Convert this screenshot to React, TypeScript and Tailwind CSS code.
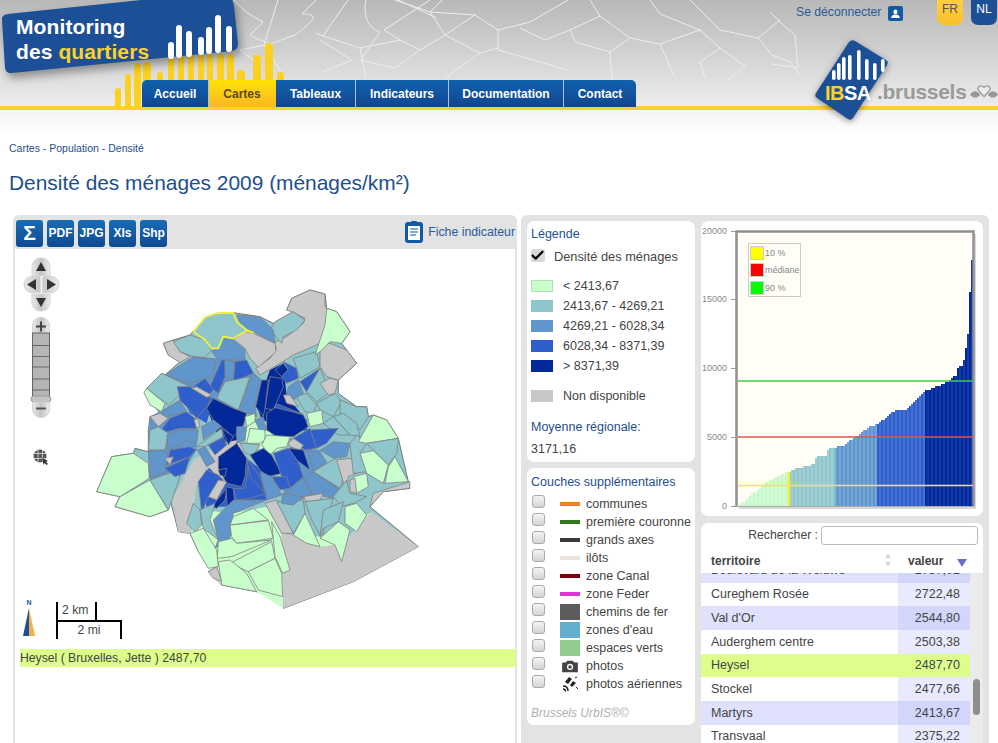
import { Check } from 'lucide-react';

const L = '#c8ffcc';
const T = '#8fc6cb';
const M = '#6096cc';
const D = '#2f5fcb';
const N = '#02289a';
const G = '#c8c8c8';

const outline =
  '20,635 65,530 130,520 135,505 175,515 175,450 180,410 210,400 165,340 170,325 215,280 225,285 270,245 235,225 220,190 250,180 300,165 345,112 380,100 430,98 510,110 550,130 610,95 590,90 605,55 660,30 705,42 710,85 740,95 780,155 755,190 770,210 800,250 745,300 745,340 800,380 830,380 835,410 850,405 890,420 925,475 955,605 960,625 880,635 840,680 985,800 790,905 580,985 578,950 500,935 395,915 355,875 380,860 325,815 300,760 265,755 255,715 240,660 235,690 180,710 75,680 90,650';

// big areas under the districts, so that no holes show between them
const underlays: Array<[string, string]> = [
  [L, '300,760 330,690 430,700 530,680 575,760 580,985 500,935 395,915 355,875 380,860 325,815'],
  [L, '610,765 700,770 760,790 800,755 830,705 845,695 760,790 755,845 690,800'],
  [M, '175,515 180,410 270,360 320,450 320,510 270,590 180,600'],
  [M, '225,285 310,230 465,240 500,290 445,390 370,355 262,325'],
  [D, '325,605 400,510 470,535 540,590 530,660 430,680 350,680'],
  [M, '580,645 600,500 690,510 750,630 660,660'],
  [D, '260,320 370,355 350,430 300,400'],
  [N, '350,385 470,400 460,440 430,500 385,470'],
  [N, '500,380 540,270 580,250 590,350 650,420 650,450 560,470 520,430'],
  [L, '455,440 520,420 600,470 590,500 540,520 470,490'],
  [G, '440,480 470,520 400,610 355,560 320,615 300,760 265,755 245,660 310,540 400,490'],
  [T, '430,380 500,290 510,300 450,400'],
  [G, '575,760 620,770 690,800 735,795 755,845 760,790 845,695 985,800 790,905 580,985'],
];

// map coordinates are in 3x space: the svg scales them down to 340px
const districts: Array<[string, string]> = [
  [G, '590,90 605,55 660,30 705,42 705,75 725,120 690,190 610,225 570,250 510,285 497,265 540,235 560,205 550,190 590,170 640,130 645,115 605,95'],
  [G, '430,178 465,155 490,160 555,190 558,215 505,262 480,235 465,205'],
  [T, '555,125 610,95 645,120 620,150 580,170 575,190 540,150'],
  [M, '440,105 510,110 550,150 555,190 490,155 460,150'],
  [G, '220,190 250,180 270,215 300,230 270,248 235,225'],
  [T, '250,185 300,165 345,180 365,210 345,232 310,230 270,215'],
  [M, '365,215 400,175 430,180 465,210 465,240 385,240'],
  [M, '225,285 310,230 375,240 370,290 330,300 300,310'],
  [D, '360,320 395,240 405,240 405,290 385,340'],
  [M, '405,240 435,245 430,300 405,290'],
  [D, '435,245 470,240 490,280 430,305'],
  [T, '170,325 215,280 300,320 262,325 270,345 235,375'],
  [L, '162,338 170,325 225,370 215,395 180,375'],
  [T, '380,355 405,305 480,290 445,390'],
  [M, '445,390 490,280 515,300 495,380 500,410'],
  [D, '262,320 300,320 350,350 365,355 350,380 320,415 300,390 270,360'],
  [D, '310,320 345,295 370,330 355,345'],
  [G, '305,325 320,320 365,345 350,352'],
  [N, '350,385 370,355 430,385 470,400 460,435 430,470 395,440 370,420'],
  [M, '215,395 270,360 290,395 225,410'],
  [G, '180,410 210,400 235,415 205,440'],
  [D, '210,455 240,415 290,395 320,420 320,445 270,445 215,460'],
  [G, '312,420 325,415 330,440 320,445'],
  [T, '180,450 205,440 235,460 225,510 175,510'],
  [M, '230,465 270,450 325,450 320,490 285,480 270,495 235,510'],
  [M, '335,440 370,420 395,440 340,480'],
  [T, '320,500 395,445 400,470 345,500'],
  [D, '355,495 400,472 410,495 375,525'],
  [M, '322,510 345,500 375,545 350,560'],
  [N, '555,270 580,250 595,270 575,290'],
  [N, '540,290 575,295 580,320 550,390 525,385'],
  [N, '497,380 515,300 535,300 525,385 520,408'],
  [D, '580,245 620,265 625,295 590,310 575,290 595,270'],
  [M, '595,320 625,300 640,340 610,360 590,340'],
  [G, '580,345 600,345 625,380 590,370'],
  [T, '610,235 680,215 690,260 630,295'],
  [D, '630,305 690,265 650,335'],
  [T, '650,335 690,265 705,300 715,340 680,365'],
  [G, '690,310 720,295 745,300 735,340 715,345'],
  [G, '690,190 720,190 770,210 800,250 745,300 710,290 690,260'],
  [L, '675,225 705,135 710,85 740,95 780,155 755,190 720,185 690,215'],
  [T, '620,350 650,340 680,375 670,400 645,395'],
  [T, '680,370 735,340 755,365 730,410 690,390'],
  [N, '530,400 560,380 640,405 655,440 610,470 560,470 530,450'],
  [D, '552,382 562,372 640,403'],
  [L, '650,400 695,390 700,430 660,440'],
  [L, '465,410 495,400 495,425 470,440'],
  [M, '495,420 520,410 530,450 510,455'],
  [T, '750,360 800,380 830,380 835,410 810,450 770,410 750,400'],
  [T, '730,410 760,400 800,430 810,470 780,465'],
  [T, '700,430 730,410 780,465 745,465'],
  [D, '660,450 745,445 710,490 680,505'],
  [D, '610,475 660,445 680,505 645,510 600,480'],
  [M, '690,510 730,485 780,490 770,530 730,535'],
  [G, '595,490 610,475 640,495 630,510 600,500'],
  [L, '470,490 480,445 525,450 525,480 510,490'],
  [L, '515,495 530,465 600,470 590,500 560,505 540,525'],
  [T, '450,490 470,490 510,495 490,525 465,520'],
  [M, '440,440 470,440 465,480 440,490'],
  [N, '395,445 430,470 415,495'],
  [N, '480,525 520,505 545,525 575,580 535,590 510,570'],
  [N, '595,505 640,510 660,570 620,540'],
  [D, '550,520 595,505 625,545 640,590 600,625 575,590'],
  [D, '545,590 590,590 600,625 570,630'],
  [M, '510,575 545,590 575,645 530,660'],
  [M, '600,625 640,595 665,640 610,670 580,645'],
  [M, '640,590 670,575 750,630 730,655 665,640'],
  [M, '655,510 690,520 710,545 670,575'],
  [T, '670,575 710,550 750,530 765,580 750,625'],
  [G, '740,540 780,535 820,570 775,590 770,640'],
  [T, '780,490 800,465 830,490 810,520 830,575 790,580'],
  [L, '805,485 850,405 890,420 925,475 830,490'],
  [T, '830,490 925,475 920,520 895,555 850,510'],
  [L, '810,520 850,512 895,555 880,610 830,580'],
  [L, '885,610 895,560 915,530 955,605'],
  [L, '790,590 830,580 835,620 800,640'],
  [G, '780,600 795,595 800,640 780,635'],
  [G, '850,640 960,605 958,625 880,635 840,680'],
  [T, '730,650 770,600 780,640 830,650 790,670 755,680'],
  [N, '385,530 440,490 470,535 465,590 455,620 410,610 385,565'],
  [N, '385,570 410,565 405,590 390,585'],
  [D, '325,605 350,570 385,585 400,600 370,630 350,660 335,700'],
  [G, '355,650 385,600 410,605 380,660'],
  [N, '365,680 410,625 405,660 380,685'],
  [N, '408,620 430,625 435,680 412,690'],
  [D, '430,625 465,625 475,560 530,640 480,655 440,660'],
  [D, '470,535 510,590 525,640 480,590'],
  [L, '20,635 65,530 130,520 175,550 178,595 90,650'],
  [L, '75,680 90,650 180,600 235,690 180,710'],
  [T, '180,600 250,575 270,590 235,690'],
  [M, '175,515 225,510 235,530 225,560 230,575 180,595'],
  [D, '225,565 300,530 285,580 255,590'],
  [D, '240,510 300,500 318,510 300,530 230,555'],
  [G, '225,535 250,530 240,555'],
  [T, '290,730 310,670 330,690 335,735 315,755'],
  [T, '330,690 375,670 360,720 385,780 340,745'],
  [M, '370,720 430,660 530,660 480,680 430,700 420,775 375,805 385,780'],
  [G, '525,670 560,660 610,760 575,760'],
  [T, '560,665 640,660 645,700 610,760'],
  [M, '578,640 640,650 610,675 575,670'],
  [G, '640,650 700,640 690,660 650,665'],
  [T, '645,665 730,655 695,775 665,720'],
  [T, '700,690 760,665 745,725 700,745 690,770'],
  [L, '765,680 800,670 830,705 800,755 765,730'],
  [L, '690,775 745,725 780,750 755,845 735,795'],
  [L, '610,765 645,700 690,800 650,790'],
  [L, '300,760 340,745 380,810 385,860 355,865 325,815'],
  [L, '420,735 535,722 550,775 440,790 425,770'],
  [L, '430,710 490,685 535,720 420,735'],
  [L, '385,785 425,775 440,790 545,780 425,830 382,835'],
  [L, '420,850 545,785 555,835 475,875'],
  [L, '475,875 555,835 575,880 578,950 505,930'],
  [L, '545,725 570,770 600,870 578,880 555,830'],
  [L, '385,845 420,840 470,880 500,935 395,915'],
  [G, '355,875 380,860 395,905 370,895'],
];

const heysel = '310,155 345,112 380,100 430,98 440,125 470,150 490,158 470,152 430,175 400,170 385,205 365,205 345,180';

const legendClasses: Array<[string, string, string]> = [
  ['< 2413,67', 'bg-[#c8ffcc]', 'border border-[#b6ddb8]'],
  ['2413,67 - 4269,21', 'bg-[#8fc6cb]', ''],
  ['4269,21 - 6028,34', 'bg-[#6096cc]', ''],
  ['6028,34 - 8371,39', 'bg-[#2f5fcb]', ''],
  ['> 8371,39', 'bg-[#02289a]', ''],
];

const layers: Array<{ label: string; swatch: string }> = [
  { label: 'communes', swatch: 'h-1 bg-[#f08020]' },
  { label: 'première couronne', swatch: 'h-1 bg-[#2e7d1a]' },
  { label: 'grands axes', swatch: 'h-1 bg-[#3a3a3a]' },
  { label: 'ilôts', swatch: 'h-1 bg-[#e8e4dc]' },
  { label: 'zone Canal', swatch: 'h-1 bg-[#7a0010]' },
  { label: 'zone Feder', swatch: 'h-1 bg-[#d838d8]' },
  { label: 'chemins de fer', swatch: 'h-4 bg-[#5c5c5c]' },
  { label: "zones d'eau", swatch: 'h-4 bg-[#62b0cc]' },
  { label: 'espaces verts', swatch: 'h-4 bg-[#93cc8f]' },
];

const rows: Array<[string, string, string, string]> = [
  ['Boulevard de la Woluwe', '2737,02', 'bg-[#e0e2fd]', 'bg-[#d3d6fb]'],
  ['Cureghem Rosée', '2722,48', 'bg-white', 'bg-[#e9eafc]'],
  ["Val d'Or", '2544,80', 'bg-[#e0e2fd]', 'bg-[#d3d6fb]'],
  ['Auderghem centre', '2503,38', 'bg-white', 'bg-[#e9eafc]'],
  ['Heysel', '2487,70', 'bg-[#ddfd8c]', 'bg-[#ddfd8c]'],
  ['Stockel', '2477,66', 'bg-white', 'bg-[#e9eafc]'],
  ['Martyrs', '2413,67', 'bg-[#e0e2fd]', 'bg-[#d3d6fb]'],
  ['Transvaal', '2375,22', 'bg-white', 'bg-[#e9eafc]'],
];

const navItems = [
  { label: 'Accueil', w: 'w-[67px]' },
  { label: 'Cartes', w: 'w-[67px]', active: true },
  { label: 'Tableaux', w: 'w-[80px]' },
  { label: 'Indicateurs', w: 'w-[93px]' },
  { label: 'Documentation', w: 'w-[115px]' },
  { label: 'Contact', w: 'w-[72px]' },
];

// curve of the sorted values, read off the chart (x px, y px)
const curve: Array<[number, number]> = [
  [737, 506], [767, 481], [787, 472], [793, 469], [813, 464], [815, 457], [825, 455], [827, 449],
  [843, 445], [857, 435], [870, 426], [877, 424], [893, 411], [905, 409], [920, 396], [924, 391],
  [943, 384], [955, 375], [957, 368], [962, 365], [966, 343], [968, 323], [970, 260], [973, 260],
];

function curveY(x: number) {
  for (let i = 1; i < curve.length; i++) {
    if (x <= curve[i][0]) {
      const [x0, y0] = curve[i - 1];
      const [x1, y1] = curve[i];
      return y0 + ((x - x0) / (x1 - x0)) * (y1 - y0);
    }
  }
  return 260;
}

function barColor(x: number, odd: boolean) {
  if (x < 789) return odd ? '#c8f8cc' : '#d2fad4';
  if (x < 834) return odd ? '#8fc6cb' : '#a0ced2';
  if (x < 877) return odd ? '#6096cc' : '#75a5d4';
  if (x < 925) return odd ? '#2f5fcb' : '#4571d2';
  return odd ? '#02289a' : '#123aa8';
}

function Chart() {
  const bars = [];
  for (let x = 737; x < 973; x += 2) {
    const y = Math.round(curveY(x) / 2) * 2;
    bars.push(<rect key={x} x={x} y={y} width={2} height={506 - y} fill={barColor(x, (x - 737) % 4 === 0)} />);
  }
  const ticks: Array<[string, number]> = [['20000', 231], ['15000', 299], ['10000', 368], ['5000', 437], ['0', 506]];
  return (
    <svg viewBox="701 221 282 295" className="h-[295px] w-[282px] font-['Liberation_Sans',sans-serif]">
      <rect x="739" y="234" width="237" height="275" fill="#d8d8d8" />
      <rect x="736" y="231" width="238" height="275" fill="#fffdf6" />
      {bars}
      <path d="M736.5 506V231.5H973.5V506" fill="none" stroke="#909090" strokeWidth="2.5" />
      <path d="M736 506.5H974" stroke="#aaa" />
      <path d="M738 381H973" stroke="#3ccf3c" strokeWidth="1.4" />
      <path d="M738 437H973" stroke="#e25555" strokeWidth="1.6" />
      <path d="M738 485.5H973" stroke="#ecec48" strokeWidth="1.3" />
      <path d="M789 472V506" stroke="#f2ee30" strokeWidth="2.5" />
      {ticks.map(([label, y]) => (
        <g key={label}>
          <path d={`M731 ${y + 0.5}H736`} stroke="#999" />
          <text x="727" y={y + 3} textAnchor="end" fontSize="9" fill="#888">{label}</text>
        </g>
      ))}
      <rect x="748.5" y="243.5" width="52" height="53" fill="#fffdf6" stroke="#ccc" />
      <rect x="750.5" y="246.5" width="13" height="13" fill="#ffff00" stroke="#ccc" />
      <rect x="750.5" y="263.5" width="13" height="13" fill="#ff0000" stroke="#ccc" />
      <rect x="750.5" y="281.5" width="13" height="13" fill="#00ff00" stroke="#ccc" />
      <text x="765" y="256" fontSize="9" fill="#888">10 %</text>
      <text x="765" y="273" fontSize="9" fill="#888">médiane</text>
      <text x="765" y="291" fontSize="9" fill="#888">90 %</text>
    </svg>
  );
}

function HeaderLines() {
  return (
    <svg viewBox="0 0 998 110" className="absolute inset-0 h-[110px] w-[998px]" fill="none" stroke="#ededed" strokeWidth="1">
      <path d="M234 0C245 12 250 15 263 22L250 35C262 42 268 42 270 44L295 35C312 22 322 14 302 14L316 0" />
      <path d="M278 0L264 45L285 78M270 44L240 50L262 66" />
      <path d="M316 33L323 36L348 0M323 36L360 48L366 78M320 40L352 60L322 72M366 0C362 20 372 30 380 32L362 58" />
      <path d="M360 48L400 40L420 50L395 68L360 60M400 40L384 30L430 0M420 50L445 35L430 12L442 0M445 35L480 53L498 48" />
      <path d="M395 0L430 12L475 15L445 35M475 15L498 30L498 50M398 0L437 18M480 53L445 78M498 50L540 62L568 70M498 30L530 22L568 0" />
      <path d="M520 28L545 40L570 30L575 42L610 52L612 80M570 30L600 16L630 38L610 52M600 16L590 0M630 38L660 44L700 30L720 48L700 62L705 78" />
      <path d="M660 44L675 78M690 0L720 30L758 38L772 55L790 62L800 75M720 48L745 66L728 80M650 0L660 14L700 30M758 38L780 20M770 12L782 24L795 35L798 68L772 64" />
      <path d="M90 104C95 98 110 100 115 105" strokeWidth="0.8" />
    </svg>
  );
}

function HeaderBars() {
  const yellow: Array<[number, number, number]> = [
    [115, 88, 6], [125, 74, 6], [134, 63, 7], [143, 62, 8], [157, 72, 6], [168, 58, 6], [178, 54, 6], [188, 54, 6],
    [198, 54, 6], [207, 54, 6], [217, 54, 7], [227, 54, 7], [237, 70, 8], [253, 55, 8], [265, 43, 8], [277, 72, 7],
  ];
  const white: Array<[number, number, number]> = [
    [168, 42, 59], [176, 25, 58], [186, 31, 57], [198, 37, 55], [206, 27, 54], [215, 15, 53], [226, 26, 52],
  ];
  return (
    <svg viewBox="0 0 300 110" className="absolute left-0 top-0 h-[110px] w-[300px]">
      {yellow.map(([x, y, w]) => (
        <rect key={x} x={x} y={y} width={w} height={107 - y} rx={w / 2} fill="#fcd01f" />
      ))}
      <path d="M2 20Q1 15 8 14L160 -2H231Q233 0 234 6L238 44Q238 50 232 51L12 73Q6 74 5 68Z" fill="#1c4f96" className="drop-shadow-[3px_5px_4px_rgba(0,0,0,0.35)]" />
      {white.map(([x, y, b]) => (
        <rect key={x} x={x} y={y} width={6} height={b - y} rx={3} fill="#fff" />
      ))}
    </svg>
  );
}

function IbsaLogo() {
  const bars: Array<[number, number, number]> = [
    [832, 70, 80], [837, 63, 80], [842, 57, 80], [848, 55, 80], [857, 50, 80], [865, 59, 80], [873, 63, 80], [881, 59, 72],
  ];
  return (
    <svg viewBox="800 30 100 100" className="absolute left-[800px] top-[30px] h-[100px] w-[100px] drop-shadow-[0_2px_3px_rgba(0,0,0,0.4)]">
      <path d="M849 42Q852 39 855 41L886 60Q889 62 887 65L853 118Q851 121 848 119L817 98Q814 96 816 93Z" fill="#1c4f96" />
      {bars.map(([x, y, b]) => (
        <rect key={x} x={x} y={y} width={3.6} height={b - y} rx={1.8} fill="#fff" />
      ))}
    </svg>
  );
}

function MapControls() {
  const up = 'M41 258C47 258 50 262 50 268V276H32V268C32 262 35 258 41 258Z';
  return (
    <svg viewBox="20 255 44 215" className="absolute left-[20px] top-[255px] h-[215px] w-[44px]">
      <defs>
        <linearGradient id="ctl" x1="0" x2="1" y1="0" y2="0">
          <stop offset="0" stopColor="#e8e8e8" />
          <stop offset="0.5" stopColor="#c4c4c4" />
          <stop offset="1" stopColor="#ededed" />
        </linearGradient>
      </defs>
      <path d={up} fill="url(#ctl)" stroke="#d4d4d4" />
      <path d="M41 262L46 271H36Z" fill="#333" />
      <rect x="24" y="276.5" width="35" height="16" rx="8" fill="url(#ctl)" stroke="#d4d4d4" />
      <path d="M27 284.5L36 279V290ZM56 284.5L47 279V290Z" fill="#333" />
      <path d="M41.5 276V293" stroke="#f4f4f4" strokeWidth="2" />
      <path d="M41 311C47 311 50 307 50 302V294H32V302C32 307 35 311 41 311Z" fill="url(#ctl)" stroke="#d4d4d4" />
      <path d="M41 307L46 298H36Z" fill="#333" />
      <path d="M32.5 333V326C32.5 321 36 317.5 41 317.5C46 317.5 49.5 321 49.5 326V333Z" fill="url(#ctl)" stroke="#d4d4d4" />
      <path d="M36 326.5H46M41 321.5V331.5" stroke="#444" strokeWidth="2" />
      <rect x="32.5" y="333" width="17" height="65" fill="#b5b5b5" stroke="#666" />
      <path d="M32 345.5H50M32 356.5H50M32 367H50M32 379H50M32 390H50" stroke="#666" />
      <rect x="31" y="396" width="20" height="6" rx="3" fill="#c4c4c4" stroke="#999" />
      <path d="M32.5 402H49.5V408C49.5 414 46 417.5 41 417.5C36 417.5 32.5 414 32.5 408Z" fill="url(#ctl)" stroke="#d4d4d4" />
      <path d="M36 408.5H46" stroke="#555" strokeWidth="2" />
      <circle cx="40" cy="456" r="6.5" fill="#555" />
      <path d="M34 453.5H46M34 458.5H46M38 450V462M42.5 450V462" stroke="#ddd" strokeWidth="0.8" />
      <path d="M42 458L48 461L46 462L48 464L46.5 465L44.5 463L43.5 465Z" fill="#333" />
    </svg>
  );
}

function ToolButton({ children, big }: { children: string; big?: boolean }) {
  return (
    <button className={`flex h-[27px] w-[27px] items-center justify-center rounded-[3px] bg-gradient-to-b from-[#1a6bb5] to-[#0f4a92] font-bold text-white ${big ? 'text-[21px]' : 'text-[12px]'}`}>
      {children}
    </button>
  );
}

function Card({ className, children }: { className: string; children: React.ReactNode }) {
  return <div className={`rounded-[7px] bg-white ${className}`}>{children}</div>;
}

function Box() {
  return <input type="checkbox" className="mt-[-5px] h-[13px] w-[13px] appearance-none rounded-[3px] border border-[#aaa] bg-gradient-to-b from-[#f4f4f4] to-[#d4d4d4]" />;
}

export default function App() {
  return (
    <div className="relative h-[743px] w-[998px] overflow-hidden bg-white font-['Liberation_Sans',sans-serif] text-[#444]">
      <header className="relative h-[110px] border-b-[4px] border-[#fcd22a] bg-gradient-to-b from-[#b8b8b8] to-[#ececec]">
        <HeaderLines />
        <HeaderBars />
        <div className="absolute left-[16px] top-[14px] text-[21px] font-bold leading-[25px] tracking-[0.1px] text-white">
          <div>Monitoring</div>
          <div>des <span className="text-[#fcd22a]">quartiers</span></div>
        </div>
        <nav className="absolute left-[142px] top-[80px] flex h-[27px] overflow-hidden rounded-tl-[5px] rounded-tr-[5px] text-[12px] font-bold">
          {navItems.map((item) => (
            <a
              key={item.label}
              className={`flex items-center justify-center border-r border-[#a8c4e0] last:border-r-0 ${item.w} ${item.active ? 'border-transparent bg-gradient-to-b from-[#ffe100] to-[#f8b820] text-[#5c4a14]' : 'bg-gradient-to-b from-[#0f62ae] to-[#11468f] text-white'}`}
            >
              {item.label}
            </a>
          ))}
        </nav>
        <div className="absolute left-[796px] top-[3px] flex items-center gap-[7px] text-[12.2px] text-[#2a5a9c]">
          <span>Se déconnecter</span>
          <span className="mt-[2px] flex h-[15px] w-[15px] items-center justify-center rounded-[2px] bg-[#125aa5]">
            <svg viewBox="0 0 12 12" className="h-[11px] w-[11px]"><path d="M6 1.5C7.5 1.5 8.2 2.6 8.2 4S7.4 6.6 6 6.6 3.8 5.4 3.8 4 4.5 1.5 6 1.5ZM1.5 11V9.5C2 8 3.5 7.5 5 7H7C8.5 7.5 10 8 10.5 9.5V11Z" fill="#fff" /></svg>
          </span>
        </div>
        <a className="absolute left-[937px] top-0 flex h-[25px] w-[26px] justify-center rounded-b-[7px] bg-gradient-to-b from-[#fccf3a] to-[#fbbf32] text-[12px] text-[#555]">FR</a>
        <a className="absolute left-[971px] top-0 flex h-[25px] w-[26px] justify-center rounded-b-[7px] bg-[#1c4f96] text-[12px] text-white">NL</a>
      </header>
      <IbsaLogo />
      <div className="absolute left-[825px] top-[81px] text-[20px] font-bold leading-[24px] tracking-[-0.5px]">
        <span className="text-[#fcd22a]">IB</span><span className="text-white">SA</span>
      </div>
      <div className="absolute left-[877px] top-[79px] text-[21px] font-bold leading-[26px] tracking-[-0.3px] text-[#9a9a9a]">.brussels</div>
      <svg viewBox="0 0 30 18" className="absolute left-[970px] top-[83px] h-[18px] w-[28px]">
        <path d="M0 12C3 7 8 7 11 12C8 16 3 16 0 12ZM19 12C22 7 27 7 30 12C27 16 22 16 19 12Z" fill="#999" />
        <path d="M15 14L9 7C7 3 12 1 15 4C18 1 23 3 21 7Z" fill="#eee" stroke="#999" strokeWidth="1.5" />
      </svg>

      <div className="h-[24px] bg-gradient-to-b from-[#f3f3f3] to-white" />
      <p className="ml-[9px] mt-[7px] text-[10.5px] leading-[14px] text-[#1d4f8c]">Cartes - Population - Densité</p>
      <h1 className="ml-[9px] mt-[14px] text-[20.9px] leading-[28px] text-[#1d4f8c]">Densité des ménages 2009 (ménages/km²)</h1>

      <div className="mt-[18px] flex pl-[13px]">
        <section className="relative h-[528px] w-[504px] rounded-tl-[6px] rounded-tr-[6px] bg-[#e3e3e3] px-[2px] pt-[2px]">
          <div className="flex h-[32px] items-center gap-[4px] pl-[1px]">
            <ToolButton big>Σ</ToolButton>
            <ToolButton>PDF</ToolButton>
            <ToolButton>JPG</ToolButton>
            <ToolButton>XIs</ToolButton>
            <ToolButton>Shp</ToolButton>
            <div className="ml-auto -mt-[2px] flex items-center gap-[4px] text-[12.3px] text-[#2a5a9c]">
              <svg viewBox="0 0 20 24" className="h-[24px] w-[20px]">
                <rect x="1" y="2" width="18" height="21" rx="3" fill="#125aa5" />
                <rect x="4" y="6" width="12" height="14" fill="#fff" />
                <rect x="7" y="1" width="6" height="4" rx="1" fill="#125aa5" />
                <path d="M6 9H14M6 12H14M6 15H12" stroke="#125aa5" />
              </svg>
              <span>Fiche indicateur</span>
            </div>
          </div>
          <div className="h-[494px] bg-white" />
          <div className="absolute inset-0 left-[-13px] top-[-215px]">
            <MapControls />
            <svg viewBox="0 0 1020 1020" className="absolute left-[90px] top-[280px] h-[340px] w-[340px]">
              <polygon points={outline} fill={T} stroke="#777" strokeWidth="3" strokeLinejoin="round" />
              {underlays.map(([fill, points], i) => (
                <polygon key={i} points={points} fill={fill} />
              ))}
              {districts.map(([fill, points], i) => (
                <polygon key={i} points={points} fill={fill} stroke="#808080" strokeWidth="2.4" strokeLinejoin="round" />
              ))}
              <polygon points={heysel} fill={T} stroke="#f4f43a" strokeWidth="5" strokeLinejoin="round" />
            </svg>
            <svg viewBox="0 0 14 38" className="absolute left-[22px] top-[599px] h-[38px] w-[14px]">
              <text x="7" y="6" textAnchor="middle" fontSize="7" fontWeight="bold" fill="#1c4f96">N</text>
              <path d="M7 9V37H1Z" fill="#1c4f96" />
              <path d="M7 9V37H13Z" fill="#f4b042" />
            </svg>
            <div className="absolute left-[56px] top-[602px] h-[18px] w-[41px] border-l-2 border-r-2 border-black pl-[4px] text-[12.2px] leading-[16px]">2 km</div>
            <div className="absolute left-[56px] top-[620px] h-[19px] w-[66px] border-l-2 border-r-2 border-t-2 border-black text-center text-[12.2px] leading-[17px]">2 mi</div>
            <div className="absolute left-[20px] top-[649px] flex h-[18px] w-[496px] items-center bg-[#ddfd8c] text-[12.2px] text-[#444]">Heysel ( Bruxelles, Jette ) 2487,70</div>
          </div>
        </section>

        <section className="ml-[4px] flex h-[528px] w-[468px] gap-[6px] rounded-tl-[6px] rounded-tr-[6px] bg-[#e3e3e3] pl-[6px] pr-[6px] pt-[6px]">
          <div className="flex w-[168px] flex-col gap-[6px]">
            <Card className="h-[241px] px-[4px] pt-[6px] text-[12.5px]">
              <h2 className="text-[12.5px] leading-[14px] text-[#1d4f8c]">Légende</h2>
              <div className="mt-[8px] flex items-center gap-[9px] text-[12.8px] leading-[16px]">
                <span className="relative -mt-[3px] h-[13px] w-[14px] rounded-[2px] bg-[#d8d8d8]">
                  <Check className="absolute -left-[1px] -top-[1px] h-[15px] w-[15px] text-black" strokeWidth={3.5} />
                </span>
                <span>Densité des ménages</span>
              </div>
              <ul className="mt-[14px] flex flex-col gap-[6px] leading-[14px]">
                {legendClasses.map(([label, bg, border]) => (
                  <li key={label} className="flex items-center gap-[10px]">
                    <span className={`h-[12px] w-[22px] ${bg} ${border}`} />
                    <span>{label}</span>
                  </li>
                ))}
              </ul>
              <div className="mt-[16px] flex items-center gap-[10px] leading-[14px]">
                <span className="h-[12px] w-[22px] bg-[#c8c8c8]" />
                <span>Non disponible</span>
              </div>
              <p className="mt-[17px] leading-[14px] text-[#1d4f8c]">Moyenne régionale:</p>
              <p className="mt-[8px] leading-[14px]">3171,16</p>
            </Card>
            <Card className="h-[257px] px-[4px] pt-[7px] text-[12.5px]">
              <h2 className="leading-[14px] text-[#1d4f8c]">Couches supplémentaires</h2>
              <ul className="mt-[6px] flex flex-col">
                {layers.map((layer) => (
                  <li key={layer.label} className="flex h-[18px] items-center">
                    <span className="ml-[1px] flex w-[28px]"><Box /></span>
                    <span className="flex w-[26px]"><span className={`w-[20px] ${layer.swatch}`} /></span>
                    <span className="whitespace-nowrap">{layer.label}</span>
                  </li>
                ))}
                <li className="flex h-[18px] items-center">
                  <span className="ml-[1px] flex w-[28px]"><Box /></span>
                  <span className="flex w-[26px]">
                    <svg viewBox="0 0 20 16" className="h-[14px] w-[20px]">
                      <path d="M1 4H5L7 2H13L15 4H19V15H1Z" fill="#444" />
                      <circle cx="10" cy="9" r="3.5" fill="#fff" />
                      <circle cx="10" cy="9" r="2" fill="#444" />
                    </svg>
                  </span>
                  <span>photos</span>
                </li>
                <li className="flex h-[18px] items-center">
                  <span className="ml-[1px] flex w-[28px]"><Box /></span>
                  <span className="flex w-[26px]">
                    <svg viewBox="0 0 20 16" className="h-[16px] w-[20px]">
                      <path d="M9 1L12 3L8 8L5 6ZM13 5L16 7L12 11L10 9Z" fill="#222" />
                      <path d="M3 10C6 10 8 12 8 15M3 13C4.5 13 5.5 14 5.5 15.5" fill="none" stroke="#222" strokeWidth="1.5" />
                      <path d="M15 2L17 1M16 11L18 13" stroke="#222" />
                    </svg>
                  </span>
                  <span>photos aériennes</span>
                </li>
              </ul>
              <p className="mt-[13px] text-[12px] italic leading-[14px] text-[#b0b0b0]">Brussels UrbIS®©</p>
            </Card>
          </div>

          <div className="flex w-[282px] flex-col gap-[7px]">
            <Card className="h-[295px]"><Chart /></Card>
            <div className="rounded-t-[7px] bg-white">
              <div className="flex h-[24px] items-center justify-end gap-[3px] pr-[5px] text-[12.2px]">
                <span>Rechercher :</span>
                <input className="h-[19px] w-[157px] rounded-[3px] border border-[#bbb] bg-white" />
              </div>
              <div className="flex h-[26px] items-center text-[12px] font-bold">
                <span className="w-[197px] pl-[10px] pt-[2px]">territoire</span>
                <svg viewBox="0 0 10 14" className="-ml-[15px] mr-[5px] h-[12px] w-[10px]"><path d="M5 0L9 5H1ZM5 14L9 9H1Z" fill="#d8d8d8" /></svg>
                <span className="ml-[10px] pt-[2px]">valeur</span>
                <svg viewBox="0 0 10 8" className="ml-[14px] mt-[6px] h-[8px] w-[10px]"><path d="M0 0H10L5 8Z" fill="#6a6ec4" /></svg>
              </div>
              <div className="flex h-[170px] overflow-hidden">
                <div className="-mt-[14px] w-[269px] text-[12.5px]">
                  {rows.map(([name, value, bg, valueBg]) => (
                    <div key={name} className="flex h-[23.7px] items-center">
                      <span className={`flex h-full w-[197px] items-center pl-[10px] ${bg}`}>{name}</span>
                      <span className={`flex h-full w-[72px] items-center justify-end pr-[10px] ${valueBg}`}>{value}</span>
                    </div>
                  ))}
                </div>
                <div className="relative w-[13px] bg-[#ebebeb]">
                  <div className="absolute left-[3px] top-[106px] h-[36px] w-[7px] rounded-full bg-[#8e8e8e]" />
                </div>
              </div>
            </div>
          </div>
        </section>
      </div>
    </div>
  );
}
